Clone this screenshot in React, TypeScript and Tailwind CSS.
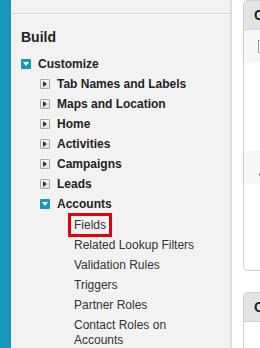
import { ReactNode } from 'react'

const font = { fontFamily: '"Liberation Sans", Arial, sans-serif' }

function Caret({ open }: { open?: boolean }) {
  if (open) {
    return (
      <span className="flex h-[10px] w-[10px] shrink-0 items-center justify-center rounded-[1px] bg-[#1797c0]">
        <svg width="6" height="4" viewBox="0 0 6 4">
          <path d="M0 0 L6 0 L3 4 Z" fill="#fff" />
        </svg>
      </span>
    )
  }
  return (
    <span className="flex h-[10px] w-[10px] shrink-0 items-center justify-center rounded-[1px] border border-[#a9a9a9] bg-gradient-to-b from-[#fafafa] to-[#dedede]">
      <svg width="4" height="6" viewBox="0 0 4 6">
        <path d="M0 0 L4 3 L0 6 Z" fill="#333" />
      </svg>
    </span>
  )
}

function Node({ label, open }: { label: string; open?: boolean }) {
  return (
    <div className="flex h-[20px] items-center gap-[7px] pl-[19px]">
      <Caret open={open} />
      <span className="text-[12px] font-bold text-[#222]">{label}</span>
    </div>
  )
}

function Leaf({ children }: { children: ReactNode }) {
  return <div className="w-[180px] py-[2.5px] pl-[53px] text-[12px] leading-[15px] text-[#333]">{children}</div>
}

function Panel({ children, className }: { children?: ReactNode; className?: string }) {
  return (
    <div className={`w-[300px] shrink-0 overflow-hidden rounded-[4px] border border-[#cfcfcf] bg-white ${className ?? ''}`}>
      <div className="flex h-[29px] items-center border-b border-[#d6d6d6] bg-[#e3e3e3] pl-[10px] text-[14px] font-bold text-[#222]">
        Custom Fields &amp; Relationships
      </div>
      {children}
    </div>
  )
}

export default function App() {
  const nodes = ['Tab Names and Labels', 'Maps and Location', 'Home', 'Activities', 'Campaigns', 'Leads']

  return (
    <div className="flex h-[348px] w-[260px] overflow-hidden bg-white" style={font}>
      <div className="w-[11px] shrink-0 bg-[#1797c0]" />

      <aside className="w-[221px] shrink-0 border-r-2 border-[#dedede] bg-[#f2f2f2]">
        <div className="h-[14px] border-b border-[#d4d4d4]" />
        <div className="h-px bg-white" />
        <div className="pl-[10px] pt-[14px]">
          <h2 className="text-[14px] font-bold leading-[16px] text-[#222]">Build</h2>

          <div className="mt-[9px]">
            <div className="flex h-[20px] items-center gap-[7px]">
              <Caret open />
              <span className="text-[12px] font-bold text-[#222]">Customize</span>
            </div>

            {nodes.map(n => (
              <Node key={n} label={n} />
            ))}
            <Node label="Accounts" open />

            <div className="pt-px">
              <Leaf>
                <span className="-ml-[3px] px-[3px] py-[2px] outline-[3px] outline-[#e5000f] outline-solid">Fields</span>
              </Leaf>
              <Leaf>Related Lookup Filters</Leaf>
              <Leaf>Validation Rules</Leaf>
              <Leaf>Triggers</Leaf>
              <Leaf>Partner Roles</Leaf>
              <Leaf>Contact Roles on Accounts</Leaf>
            </div>
          </div>
        </div>
      </aside>

      <main className="flex shrink-0 flex-col pl-[11px]">
        <Panel className="h-[271px]">
          <div className="flex h-[33px] items-center bg-[#f7f7f7] pl-[14px]">
            <div className="h-[13px] w-[40px] border border-[#9a9a9a] bg-white" />
          </div>
          <div className="h-[88px]" />
          <div className="flex h-[33px] items-end bg-[#f7f7f7] pb-[8px] pl-[15px]">
            <div className="h-[3px] w-[3px] bg-[#999]" />
          </div>
        </Panel>

        <Panel className="mt-[21px] h-[100px]" />
      </main>
    </div>
  )
}
